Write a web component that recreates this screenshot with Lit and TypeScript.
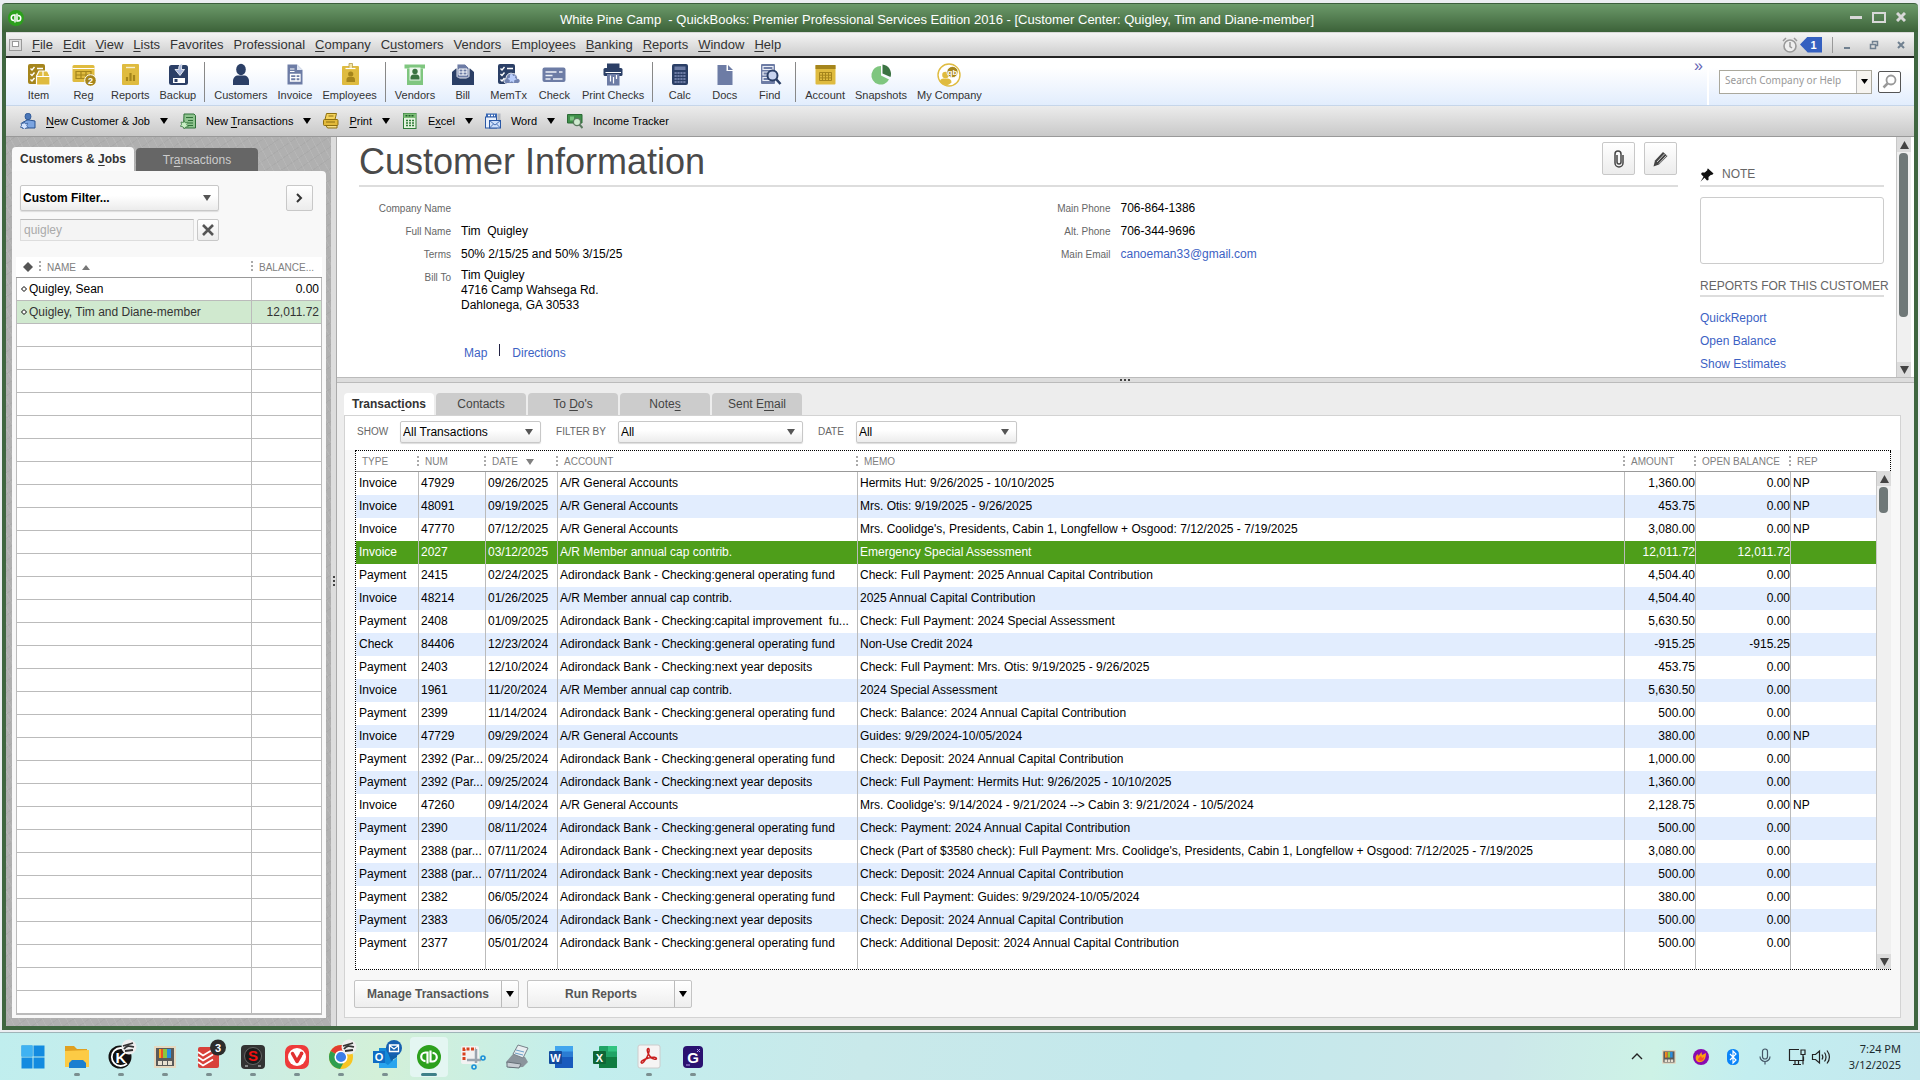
import { LitElement, html, css, svg, nothing } from "lit";
import { customElement, property } from "lit/decorators.js";
import { classMap } from "lit/directives/class-map.js";

/* ---------- shared helpers ---------- */

/** Turns "C_ustomers" into C<u>u</u>stomers. */
const mnemonic = (text: string) => {
  const at = text.indexOf("_");
  if (at < 0) return html`${text}`;
  return html`<span>${text.slice(0, at)}<u>${text[at + 1]}</u>${text.slice(at + 2)}</span>`;
};

const GOLD = "#dfbb3f";
const DGOLD = "#a5851c";
const NAVY = "#2b3f66";
const SLATE = "#6d7ca5";
const GREEN = "#7fc67f";
const DGREEN = "#3b7342";

const checklist = (c: string, k: string) => svg`
  <rect x="1" y="1" width="17" height="20" rx="2" fill="${c}"/>
  <path d="M3.500 5.500l1.500 1.500 2.500-3M3.500 11l1.500 1.500 2.500-3M3.500 16.500l1.500 1.500 2.500-3M10 5.500h6" fill="none" stroke="${k}" stroke-width="1.400"/>`;

const icons: Record<string, unknown> = {
  item: svg`${checklist(DGOLD, "#fff")}
    <path d="M9.500 13l2.500-5h8.500l2.500 5v9h-13.500z" fill="${GOLD}" stroke="#fff" stroke-width="1.200"/>
    <path d="M9.500 13.500h13.500M16 8v5" stroke="#fff" stroke-width="1.200"/>`,
  reg: svg`<rect x="0.500" y="2" width="22" height="17" rx="1.500" fill="${GOLD}"/>
    <path d="M0.500 5.500h22" stroke="#fff" stroke-width="1"/>
    <path d="M4 8.500h15v7h-15zM4 12h15M9 8.500v7M14 8.500v7" fill="none" stroke="${DGOLD}" stroke-width="1.200"/>
    <circle cx="18.500" cy="17.500" r="5.800" fill="${DGOLD}" stroke="#fff"/>
    <text x="18.500" y="21" font-size="9" font-weight="700" fill="#fff" text-anchor="middle">2</text>`,
  reports: svg`<rect x="4" y="1" width="17" height="21" rx="1" fill="${GOLD}"/>
    <path d="M8 4.500h9" stroke="#f7efd0" stroke-width="1.400"/>
    <path d="M9 18v-4M12.500 18v-8M16 18v-6" stroke="${DGOLD}" stroke-width="2.200"/>`,
  backup: svg`<rect x="3" y="2" width="19" height="20" rx="2.500" fill="${NAVY}"/>
    <rect x="7" y="15" width="12" height="5" fill="#fff"/><rect x="8.500" y="16" width="3" height="3" fill="${NAVY}"/>
    <path d="M16.500 0.500c-3.500 1-4 3.500-3.800 6h-3.700l5 6 4.500-6h-3c0-2.500 0-4 1-6z" fill="#a9b8dc" stroke="#fff" stroke-width="0.800"/>`,
  customers: svg`<ellipse cx="12" cy="6.500" rx="4.800" ry="5.800" fill="${NAVY}"/>
    <path d="M4 22v-4c0-3.500 2.500-5.500 5-5.500h6c2.500 0 5 2 5 5.500v4z" fill="${NAVY}"/>`,
  invoice: svg`<path d="M4.500 1.500h9.500l5.500 5.500v14.500h-15z" fill="${SLATE}"/>
    <path d="M14 1.500v5.500h5.500z" fill="#dfe5f2"/>
    <path d="M7 6h4.500M7 8.500h4.500" stroke="#fff" stroke-width="1.200"/>
    <path d="M7.500 11.500h9.500v6.500h-9.500zM7.500 14.700h9.500M13 11.500v6.500" fill="none" stroke="#fff" stroke-width="1.300"/>`,
  employees: svg`<rect x="4" y="3" width="17" height="19" rx="1" fill="${GOLD}"/>
    <path d="M11 0.500h3.500v5h-3.500z" fill="#f4e4a4" stroke="#b8a04c" stroke-width="0.800"/>
    <path d="M7.500 5.500h10" stroke="#fff" stroke-width="1.200"/>
    <circle cx="12.700" cy="11" r="2.600" fill="${DGOLD}"/><path d="M8.500 19v-2.500c0-2 1.500-2.500 2.500-2.500h3.500c1 0 2.500 0.500 2.500 2.500v2.500z" fill="${DGOLD}"/>`,
  vendors: svg`<path d="M1.500 1.500h20.500v4h-20.500z" fill="${GREEN}"/><path d="M4 5.500h16v16.500h-16z" fill="${GREEN}"/>
    <path d="M6.500 4.500h11v13h-11z" fill="#edf7ed"/>
    <circle cx="12" cy="8.500" r="2.700" fill="${DGREEN}"/><path d="M7.500 16.500v-2c0-2 1.500-3 3-3h3c1.500 0 3 1 3 3v2z" fill="${DGREEN}"/>`,
  bill: svg`<path d="M1 9l4-3.500h14l4 3.500v13h-22z" fill="${NAVY}"/>
    <path d="M6 1h8l4 4v10h-12z" fill="${SLATE}" stroke="#fff" stroke-width="0.900"/>
    <path d="M8 6h8v6h-8zM8 9h8M12 6v6" fill="none" stroke="#fff" stroke-width="1"/>
    <path d="M1 11l8 5h6l8-5v11h-22z" fill="${NAVY}"/>`,
  memtx: svg`${checklist(NAVY, "#fff")}
    <path d="M9.500 20.500c-3 0-3.500-4-0.500-5 0-4 3.500-6 6.500-5 4 0 5 3 5 5 3.500 0 3.500 4.500 0 5z" fill="#7283b0" stroke="#fff" stroke-width="0.900"/>
    <path d="M15 10.500l1.200 2.500 2.600-0.800-0.900 2.500 2 1.600-2.600 0.900-0.300 2.700-2.100-1.700-2.300 1.400 0.200-2.700-2.300-1.200 2.500-1.200-0.200-2.700z" fill="#b9cdfb"/>`,
  check: svg`<rect x="0.500" y="4.500" width="23" height="14.500" rx="2" fill="${SLATE}"/>
    <path d="M3.500 9h11M3.500 12.500h7M3.500 16h5M17 9h3.500M11 16h9.500" stroke="#eef1f8" stroke-width="1.500"/>`,
  printchecks: svg`<path d="M6 0.500h12.500v6h-12.500z" fill="${NAVY}"/><rect x="2.500" y="5" width="19" height="8" rx="1.500" fill="${NAVY}"/>
    <path d="M6 11h12.500v11.500h-12.500z" fill="${SLATE}"/><path d="M4.500 9.500h15.500" stroke="#fff" stroke-width="1"/>
    <path d="M9.500 12.500v6M12.500 14v6.500M15.500 12v4" stroke="#fff" stroke-width="1.200"/>`,
  calc: svg`<rect x="4" y="1" width="16" height="21" rx="2" fill="${NAVY}"/><rect x="6.500" y="3.500" width="11" height="3.500" fill="${SLATE}"/>
    <path d="M6.500 10h11M6.500 13h11M6.500 16h11M6.500 19h11" stroke="${SLATE}" stroke-width="2" stroke-dasharray="2.200 0.730"/>`,
  docs: svg`<path d="M4.500 2h9v6h6v14h-15z" fill="${SLATE}"/><path d="M15 2l5 5h-5z" fill="${SLATE}"/>`,
  find: svg`<rect x="3" y="1" width="14" height="20" rx="1" fill="${SLATE}"/>
    <path d="M5 3.500h10v3h-10zM5 9h10v3h-10zM5 14.500h10v3h-10z" fill="none" stroke="#e9edf6" stroke-width="1.200"/>
    <circle cx="14.500" cy="12.500" r="5" fill="#c9d4ee" stroke="${NAVY}" stroke-width="2"/><path d="M18 16l4.500 5" stroke="${NAVY}" stroke-width="2.600"/>`,
  account: svg`<rect x="2.500" y="2" width="20" height="19.500" rx="1" fill="${GOLD}"/><path d="M2.500 2h20v4h-20z" fill="${DGOLD}"/>
    <path d="M6.500 9.500h12v8h-12zM6.500 12.200h12M6.500 14.900h12M9.500 9.500v8M12.500 9.500v8M15.500 9.500v8" fill="none" stroke="${DGOLD}" stroke-width="1"/>`,
  snapshots: svg`<path d="M12 3a9.300 9.300 0 1 0 8 13.500l-8-4z" fill="${GREEN}"/><path d="M13.500 1.500a9.500 9.500 0 0 1 8 12.500l-8-3.500z" fill="${DGREEN}"/>`,
  mycompany: svg`<circle cx="12" cy="12" r="11" fill="#fff" stroke="${GOLD}" stroke-width="1.400"/>
    <circle cx="8.500" cy="12" r="3.300" fill="${GOLD}"/><path d="M3 19c0-3 2-3.500 4-3.500h3.500c2 0 4 1 4 4-3 3.500-8.500 3.500-11.500-0.500z" fill="${GOLD}"/>
    <circle cx="15.500" cy="9" r="5.600" fill="${DGOLD}" stroke="#fff" stroke-width="0.800"/><text x="15.500" y="11.500" font-size="8" font-weight="700" fill="#fff" text-anchor="middle">qb</text>`,

  /* action bar, 16 x 16 */
  newcustomer: svg`<ellipse cx="8" cy="3.500" rx="3" ry="3.300" fill="#4a76b8" stroke="#27508f" stroke-width="0.800"/>
    <path d="M2 15v-5l5-3h2l6 1v7z" fill="#7ba4e0" stroke="#27508f"/><path d="M4 8.500l1.200 2.300 2.500-0.500-1 2.300 1.500 2-2.500 0.400-1.500 1.800-1.300-2-2.500-0.500 1.200-2-0.600-2.300 2.300 0.500z" fill="#d5e5ff" stroke="#27508f" stroke-width="0.700"/>`,
  newtransaction: svg`<path d="M4 1h10l1.500 1.500v12.500h-12z" fill="#8fc48f" stroke="#2f7038"/><path d="M6 4.500h7M8 7.500h5M8 10h5M8 12.500h5" stroke="#2f7038"/>
    <path d="M4 7.500l1.200 2.300 2.500-0.500-1 2.300 1.500 2-2.500 0.400-1.500 1.800-1.300-2-2.500-0.500 1.200-2-0.600-2.300 2.300 0.500z" fill="#c9efc5" stroke="#2f7038" stroke-width="0.700"/>`,
  print: svg`<path d="M3.500 0.500h10l-1.500 6h-10z" fill="#f4d25a" stroke="#8d6f10"/><rect x="0.500" y="6.500" width="14.500" height="6" rx="1" fill="#e2b93a" stroke="#8d6f10"/>
    <path d="M3 12.500h11v2.500h-9.500z" fill="#f7e08a" stroke="#8d6f10"/><path d="M3 9h9M5.500 3h5" stroke="#8d6f10"/>`,
  excel: svg`<rect x="1.500" y="0.500" width="12.500" height="15" fill="#e4f4df" stroke="#2f7a37"/><path d="M1.500 0.500h12.500v4.500h-12.500z" fill="#7cbd76"/>
    <path d="M4 7.500h8M4 10h8M4 12.500h8" stroke="#2f7a37" stroke-width="1.600" stroke-dasharray="2 1"/><path d="M3.500 2.700h9" stroke="#1d5c26" stroke-dasharray="2 1" stroke-width="1.600"/>`,
  word: svg`<path d="M1 0.500h11v4h-11z" fill="#3767b5"/><path d="M12.500 0.500h3v12h-3z" fill="#b4b8c0"/><rect x="0.500" y="4" width="11" height="11" fill="#e8f0fc" stroke="#2a58a5"/>
    <path d="M3 2.500h7" stroke="#fff" stroke-dasharray="2 1" stroke-width="1.600"/><rect x="4.500" y="7.500" width="11" height="7.500" fill="#cfe0fa" stroke="#2a58a5"/><path d="M4.500 7.500l5.500 4.500 5.500-4.500M4.500 15l4-4M15.500 15l-4-4" fill="none" stroke="#2a58a5" stroke-width="0.800"/>`,
  income: svg`<path d="M0.500 1.500h14.500v8.500h-14.500z" fill="#3f8f4a" stroke="#2b6a35"/><path d="M3 3.500h4v4h-4z" fill="#7cc482"/><circle cx="10" cy="9" r="3.600" fill="#cfead0" stroke="#5c7a60" stroke-width="1.300"/><path d="M12.500 11.500l3 3.500" stroke="#5c7a60" stroke-width="2"/>`,
};

const icon = (name: string, box = 24) => html`<svg class="ico" width=${box} height=${box} viewBox="0 0 ${box} ${box}" aria-hidden="true">${icons[name]}</svg>`;
const caret = html`<svg class="caret" width="8" height="6" viewBox="0 0 8 6" aria-hidden="true"><path d="M0 0h8l-4 6z" fill="currentColor" /></svg>`;

const base = css`
  :host, * { box-sizing: border-box; }
  button, input, select, textarea { font: inherit; color: inherit; margin: 0; padding: 0; border: 0; background: none; border-radius: 0; }
  button { cursor: pointer; }
  a { color: #3c62c4; text-decoration: none; }
  u { text-underline-offset: 2px; }
  svg { display: block; flex: none; }
`;

const control = css`
  .soft { display: flex; align-items: center; justify-content: center; border: 1px solid #c8c8c8; border-radius: 2px; background: linear-gradient(#fff, #ececec); color: #444; }
  .pick { display: grid; align-items: center; border: 1px solid #c8c8c8; border-radius: 2px; background: linear-gradient(#fff 40%, #ececec); box-shadow: 0 1px 1px #ddd; color: #555; }
  .pick > * { grid-area: 1 / 1; }
  .pick select { appearance: none; width: 100%; height: 100%; padding-left: 2px; color: #000; }
  .pick .caret { justify-self: end; margin-right: 7px; pointer-events: none; }
`;

/* ---------- window chrome ---------- */

const menus = ["_File", "_Edit", "_View", "_Lists", "Favorites", "Professional", "_Company", "C_ustomers", "Vend_ors", "Emplo_yees", "_Banking", "_Reports", "_Window", "_Help"];

const tools: ([string, string] | null)[] = [
  ["item", "Item"], ["reg", "Reg"], ["reports", "Reports"], ["backup", "Backup"], null,
  ["customers", "Customers"], ["invoice", "Invoice"], ["employees", "Employees"], null,
  ["vendors", "Vendors"], ["bill", "Bill"], ["memtx", "MemTx"], ["check", "Check"], ["printchecks", "Print Checks"], null,
  ["calc", "Calc"], ["docs", "Docs"], ["find", "Find"], null,
  ["account", "Account"], ["snapshots", "Snapshots"], ["mycompany", "My Company"],
];

const actions: [string, string, boolean][] = [
  ["newcustomer", "_New Customer & Job", true],
  ["newtransaction", "New _Transactions", true],
  ["print", "_Print", true],
  ["excel", "E_xcel", true],
  ["word", "Word", true],
  ["income", "Income Tracker", false],
];

@customElement("window-chrome")
class WindowChrome extends LitElement {
  static styles = [base, css`
    :host { display: block; flex: none; }
    .title { display: flex; align-items: center; height: 29px; padding: 0 12px 0 6px; border-top: 1px solid #3c5f3c; border-radius: 4px 4px 0 0; background: linear-gradient(#6c9a6a, #3c6239); color: #fff; }
    .title h1 { flex: 1; margin: 0; padding-top: 4px; font-size: 13px; line-height: 16px; font-weight: 400; text-align: center; white-space: pre; }
    .winbtns { display: flex; align-items: center; gap: 10px; padding-bottom: 3px; }
    .frame { border: solid #3f6640; border-width: 0 4px; background: #fff; }
    .menu { display: flex; align-items: center; gap: 10px; height: 26px; padding: 0 8px 0 3px; border-bottom: 2px solid #222; border-top: 1px solid #d8d8d8; background: linear-gradient(#f4f4f4, #cdcdcd); color: #333; font-size: 13px; }
    .menu nav { display: flex; gap: 10px; }
    .menu button { line-height: 16px; white-space: nowrap; }
    .mdi { display: flex; align-items: center; margin-left: auto; }
    .badge { display: flex; align-items: center; justify-content: center; width: 22px; height: 16px; padding-left: 5px; margin-left: 2px; background: #3560c0; clip-path: polygon(0 50%, 35% 0, 100% 0, 100% 100%, 35% 100%); color: #fff; font-weight: 700; font-size: 11px; }
    .rule { width: 1px; height: 16px; background: #999; margin: 0 9px 0 10px; }
    .mdi .boxes { display: flex; gap: 17px; }
    .tools { display: flex; height: 48px; padding-left: 10px; border-bottom: 1px solid #c6d6ea; background: linear-gradient(#fff 20%, #e2edfd); color: #333; font-size: 11px; }
    .tool { display: flex; flex-direction: column; align-items: center; gap: 1px; min-width: 45px; padding: 5px 5px 0; white-space: nowrap; line-height: 14px; }
    .sep { width: 1px; margin: 4px 4px 3px 3px; background: #888; }
    .more { margin: 1px 4px 0 auto; align-self: flex-start; color: #6464b4; font-size: 16px; line-height: 14px; }
    .search { display: flex; align-items: center; gap: 6px; padding: 0 13px 0 10px; border-left: 2px solid #fff; }
    .field { display: flex; width: 153px; height: 24px; border: 1px solid #aaa89c; background: #fff; }
    .field input { flex: 1; min-width: 0; padding: 0 5px 3px; font-family: "Noto Sans", sans-serif; font-size: 10px; outline: 0; }
    .field input::placeholder { color: #999; opacity: 1; }
    .field button { display: flex; align-items: center; justify-content: center; width: 15px; border-left: 1px solid #bbb; background: #f6f4f0; color: #000; }
    .go { display: flex; align-items: center; justify-content: center; width: 23px; height: 22px; border: 1px solid #555; border-radius: 2px; background: #fff; }
    .actions { display: flex; align-items: center; height: 31px; padding-left: 14px; border-bottom: 1px solid #999; background: linear-gradient(#ececec, #c9c9c9); color: #000; font-size: 11px; }
    .actions button { display: flex; align-items: center; gap: 10px; margin-right: 12px; line-height: 14px; white-space: nowrap; }
  `];

  render() {
    return html`
      <header class="title">
        <svg width="16" height="16" viewBox="0 0 16 16" aria-hidden="true"><circle cx="8" cy="8" r="8" fill="#2ca01c" /><path d="M7 12.500v-7.500h-1a2.700 2.700 0 0 0 0 5.500M9 3.500v7.500h1a2.700 2.700 0 0 0 0-5.500" fill="none" stroke="#fff" stroke-width="1.500" /></svg>
        <h1>White Pine Camp  - QuickBooks: Premier Professional Services Edition 2016 - [Customer Center: Quigley, Tim and Diane-member]</h1>
        <div class="winbtns">
          <button aria-label="Minimize"><svg width="12" height="12" viewBox="0 0 12 12"><path d="M0 6.500h12" stroke="#d8d8d8" stroke-width="3" /></svg></button>
          <button aria-label="Maximize"><svg width="14" height="12" viewBox="0 0 14 12"><rect x="1" y="2" width="12" height="9" fill="none" stroke="#d8d8d8" stroke-width="2" /></svg></button>
          <button aria-label="Close"><svg width="10" height="10" viewBox="0 0 10 10"><path d="M1 1l8 8M9 1l-8 8" stroke="#d8d8d8" stroke-width="3" /></svg></button>
        </div>
      </header>
      <div class="frame">
        <div class="menu">
          <svg width="13" height="12" viewBox="0 0 13 12" aria-hidden="true"><rect x="0.500" y="0.500" width="12" height="11" fill="#ddd" stroke="#999" /><rect x="3.500" y="2.500" width="6" height="5" fill="#fff" stroke="#999" /></svg>
          <nav>${menus.map((m) => html`<button>${mnemonic(m)}</button>`)}</nav>
          <div class="mdi">
            <svg width="16" height="16" viewBox="0 0 16 16" aria-hidden="true"><circle cx="8" cy="9" r="6" fill="#eee" stroke="#999" stroke-width="1.600" /><path d="M8 5v4.500l2 1.500M1 4l3-3M15 4l-3-3" fill="none" stroke="#999" stroke-width="1.500" /></svg>
            <span class="badge">1</span><span class="rule"></span>
            <div class="boxes">
              <button aria-label="Minimize document"><svg width="10" height="10" viewBox="0 0 10 10"><path d="M2 8h6" stroke="#708090" stroke-width="2" /></svg></button>
              <button aria-label="Restore document"><svg width="10" height="10" viewBox="0 0 10 10"><path d="M3.500 3.500v-2h5v4h-2M1.500 4.500h5v4h-5z" fill="none" stroke="#708090" stroke-width="1.500" /></svg></button>
              <button aria-label="Close document"><svg width="10" height="10" viewBox="0 0 10 10"><path d="M2 2l6 6M8 2l-6 6" stroke="#708090" stroke-width="2" /></svg></button>
            </div>
          </div>
        </div>
        <div class="tools">
          ${tools.map((t) => (t ? html`<button class="tool">${icon(t[0])}<span>${t[1]}</span></button>` : html`<span class="sep"></span>`))}
          <button class="more" aria-label="More tools">»</button>
          <div class="search">
            <div class="field">
              <input aria-label="Search" placeholder="Search Company or Help" />
              <button aria-label="Search scope"><svg width="7" height="5" viewBox="0 0 7 5"><path d="M0 0h7l-3.500 5z" /></svg></button>
            </div>
            <button class="go" aria-label="Go"><svg width="15" height="15" viewBox="0 0 15 15"><circle cx="9" cy="6" r="4.500" fill="none" stroke="#999" stroke-width="1.800" /><path d="M5.500 9.500l-4 4" stroke="#999" stroke-width="2.500" /></svg></button>
          </div>
        </div>
        <div class="actions">
          ${actions.map(([i, label, more]) => html`<button>${icon(i, 16)}${mnemonic(label)}${more ? caret : nothing}</button>`)}
        </div>
      </div>`;
  }
}

/* ---------- scroll bar ---------- */

@customElement("scroll-rail")
class ScrollRail extends LitElement {
  @property({ type: Number }) thumb = 20;
  static styles = css`
    :host { box-sizing: border-box; display: flex; flex-direction: column; flex: none; width: 15px; background: #f0f0f0; border-left: 1px solid #c8c8c8; }
    .end { display: flex; align-items: center; justify-content: center; flex: none; height: 15px; background: #dcdcdc; }
    .track { flex: 1; padding: 1px 3px 1px 2px; }
    .thumb { border-radius: 4px; background: #6f7878; }
  `;
  render() {
    return html`
      <div class="end"><svg width="9" height="8" viewBox="0 0 9 8"><path d="M0 8h9l-4.500-8z" fill="#444" /></svg></div>
      <div class="track"><div class="thumb" style="height:${this.thumb}px"></div></div>
      <div class="end"><svg width="9" height="8" viewBox="0 0 9 8"><path d="M0 0h9l-4.500 8z" fill="#444" /></svg></div>`;
  }
}

/* ---------- customer list ---------- */

const customers: [string, string][] = [["Quigley, Sean", "0.00"], ["Quigley, Tim and Diane-member", "12,011.72"]];

@customElement("customer-list")
class CustomerList extends LitElement {
  static styles = [base, control, css`
    :host { display: flex; flex-direction: column; flex: none; width: 325px; padding: 10px 5px 8px 6px; font-size: 12px;
      background: repeating-linear-gradient(62deg, #ffffff14 0 1px, #0000 1px 7px), repeating-linear-gradient(-35deg, #00000008 0 1px, #0000 1px 9px), #b0b0b0; }
    .tabs { display: flex; gap: 2px; align-items: flex-end; }
    .tab { width: 122px; height: 23px; border-radius: 4px 4px 0 0; background: #666; color: #ccc; line-height: 22px; }
    .tab.on { height: 24px; background: #fafafa; color: #333; font-weight: 700; }
    .card { display: flex; flex-direction: column; flex: 1; min-height: 0; padding: 14px 4px 3px; background: #f8f8f8; border-radius: 0 4px 0 0; }
    .bar { display: flex; justify-content: space-between; padding: 0 9px 0 4px; }
    .filter { width: 199px; height: 26px; font-weight: 700; }
    .next { width: 27px; height: 26px; }
    .query { display: flex; gap: 3px; padding: 8px 4px 16px; }
    .query input { width: 174px; height: 22px; padding: 0 3px 1px; border: 1px solid #ddd; border-top-color: #bbb; background: #f4f4f4; color: #aaa; }
    .clear { width: 22px; height: 22px; }
    table { width: 100%; border-collapse: separate; border-spacing: 0; table-layout: fixed; background: #fff; }
    .list { flex: 1; min-height: 0; overflow: hidden; background: #fff; border-bottom: 1px solid #bbb; }
    .money { width: 71px; }
    th { height: 21px; padding: 0 0 0 7px; border-bottom: 1px solid #999; text-align: left; font-size: 10px; font-weight: 400; color: #808080; white-space: nowrap; }
    th.money { padding-left: 0; }
    .head { display: flex; align-items: center; gap: 6px; }
    .dots { width: 2px; height: 12px; background: repeating-linear-gradient(#aaa 0 2px, #0000 2px 4px); }
    td { height: 23px; padding: 0 2px; border: solid #bbb; border-width: 0 0 1px 1px; line-height: 16px; white-space: nowrap; color: #000; }
    td:last-child { border-right-width: 1px; text-align: right; }
    .on td { background: #d0e9cf; color: #333; }
    .name { display: flex; align-items: center; gap: 2px; padding-left: 2px; }
  `];

  render() {
    const rows = [...customers, ...Array.from({ length: 30 }, () => ["", ""])];
    return html`
      <div class="tabs" role="tablist">
        <button class="tab on" role="tab">${mnemonic("Customers & _Jobs")}</button>
        <button class="tab" role="tab">${mnemonic("Tr_ansactions")}</button>
      </div>
      <div class="card">
        <div class="bar">
          <div class="pick filter"><select aria-label="Customer filter"><option>Custom Filter...</option></select>${caret}</div>
          <button class="soft next" aria-label="Expand list"><svg width="7" height="10" viewBox="0 0 7 10"><path d="M1 1l4 4-4 4" fill="none" stroke="#333" stroke-width="2" /></svg></button>
        </div>
        <div class="query">
          <input aria-label="Find customer" .value=${"quigley"} />
          <button class="soft clear" aria-label="Clear search"><svg width="12" height="12" viewBox="0 0 12 12"><path d="M1 1l10 10M11 1l-10 10" stroke="#555" stroke-width="2.600" /></svg></button>
        </div>
        <div class="list">
          <table>
            <thead><tr>
              <th><span class="head"><svg width="10" height="10" viewBox="0 0 10 10"><path d="M5 0l5 5-5 5-5-5z" fill="#555" /></svg><span class="dots"></span>NAME<svg width="8" height="5" viewBox="0 0 8 5"><path d="M0 5h8l-4-5z" fill="#777" /></svg></span></th>
              <th class="money"><span class="head"><span class="dots"></span>BALANCE...</span></th>
            </tr></thead>
            <tbody>
              ${rows.map(([name, balance], i) => html`<tr class=${i === 1 ? "on" : ""}>
                <td>${name ? html`<span class="name"><svg width="6" height="6" viewBox="0 0 6 6"><path d="M3 0.500l2.500 2.500-2.500 2.500-2.500-2.500z" fill="#fff" stroke="#000" /></svg>${name}</span>` : nothing}</td>
                <td>${balance}</td></tr>`)}
            </tbody>
          </table>
        </div>
      </div>`;
  }
}

/* ---------- customer details ---------- */

@customElement("customer-info")
class CustomerInfo extends LitElement {
  static styles = [base, control, css`
    :host { display: flex; flex: none; height: 240px; overflow: hidden; padding: 0 3px 0 22px; background: #fff; font-size: 12px; color: #000; }
    .info { flex: 1; min-width: 0; }
    .top { display: flex; align-items: flex-start; gap: 9px; height: 50px; padding: 5px 1px 0 0; border-bottom: 2px solid #ddd; }
    h2 { flex: 1; margin: 0; font-size: 36px; line-height: 40px; font-weight: 400; color: #4a4a4a; }
    .tool { width: 33px; height: 33px; }
    .cols { display: grid; grid-template-columns: 1fr 1fr; padding-top: 10px; }
    dl { display: grid; grid-template-columns: 92px 1fr; grid-auto-rows: minmax(23px, auto); column-gap: 10px; align-content: start; margin: 0; line-height: 22px; }
    dt { text-align: right; font-size: 10px; line-height: 23px; color: #666; }
    dd { margin: 0; white-space: pre; }
    .addr { padding-top: 2px; line-height: 15px; white-space: pre-line; }
    .links { display: flex; gap: 12px; padding: 31px 0 0 105px; line-height: 18px; }
    .bar { width: 1px; height: 12px; background: #224; }
    aside { width: 184px; margin: 0 12px 0 22px; }
    h3 { display: flex; align-items: flex-end; gap: 8px; margin: 0; padding-bottom: 3px; border-bottom: 2px solid #ddd; font-size: 12px; line-height: 16px; font-weight: 400; color: #666; white-space: nowrap; }
    .note { height: 50px; }
    .reports { height: 29px; padding-bottom: 1px; }
    textarea { display: block; width: 100%; height: 67px; margin: 10px 0 4px; border: 1px solid #ccc; border-radius: 3px; resize: none; }
    ul { margin: 10px 0 0; padding: 0; list-style: none; line-height: 23px; }
  `];

  render() {
    return html`
      <section class="info">
        <div class="top">
          <h2>Customer Information</h2>
          <button class="soft tool" aria-label="Attach"><svg width="12" height="18" viewBox="0 0 12 18"><path d="M4 5v7a2 2 0 0 0 4 0v-8a3 3 0 0 0-6 0v9a4 4 0 0 0 8 0v-8" fill="none" stroke="#444" stroke-width="1.500" /></svg></button>
          <button class="soft tool" aria-label="Edit"><svg width="16" height="16" viewBox="0 0 16 16"><path d="M0.500 15.500l1.500-6 8-8.500 4.500 4-8.500 8.500z" fill="#444" /><path d="M4 11l7.500-8M6 12.500l7.500-8" stroke="#ddd" stroke-width="0.900" /></svg></button>
        </div>
        <div class="cols">
          <div>
            <dl>
              <dt>Company Name</dt><dd></dd>
              <dt>Full Name</dt><dd>Tim  Quigley</dd>
              <dt>Terms</dt><dd>50% 2/15/25 and 50% 3/15/25</dd>
              <dt>Bill To</dt><dd class="addr">${"Tim Quigley\n4716 Camp Wahsega Rd.\nDahlonega, GA 30533"}</dd>
            </dl>
            <div class="links"><a href="#map">Map</a><span class="bar"></span><a href="#directions">Directions</a></div>
          </div>
          <dl>
            <dt>Main Phone</dt><dd>706-864-1386</dd>
            <dt>Alt. Phone</dt><dd>706-344-9696</dd>
            <dt>Main Email</dt><dd><a href="mailto:canoeman33@gmail.com">canoeman33@gmail.com</a></dd>
          </dl>
        </div>
      </section>
      <aside>
        <h3 class="note"><svg width="14" height="14" viewBox="0 0 14 14" aria-hidden="true"><path d="M8 0.500l5.500 5-1.500 1.500-1-0.300-2.500 2.300v3l-1.500 0.500-2.500-2.800-4 4 3-5-2.500-2.700 1-1.500h2.800l2.700-2.500-0.300-1z" fill="#111" /></svg><label for="note">NOTE</label></h3>
        <textarea id="note"></textarea>
        <h3 class="reports">REPORTS FOR THIS CUSTOMER</h3>
        <ul><li><a href="#quick">QuickReport</a></li><li><a href="#open">Open Balance</a></li><li><a href="#estimates">Show Estimates</a></li></ul>
      </aside>
      <scroll-rail .thumb=${164}></scroll-rail>`;
  }
}

/* ---------- transactions ---------- */

const GA = "A/R General Accounts";
const MA = "A/R Member annual cap contrib.";
const OP = "Adirondack Bank - Checking:general operating fund";
const CI = "Adirondack Bank - Checking:capital improvement  fu...";
const NY = "Adirondack Bank - Checking:next year deposits";

const transactions: string[][] = [
  ["Invoice", "47929", "09/26/2025", GA, "Hermits Hut: 9/26/2025 - 10/10/2025", "1,360.00", "0.00", "NP"],
  ["Invoice", "48091", "09/19/2025", GA, "Mrs. Otis: 9/19/2025 - 9/26/2025", "453.75", "0.00", "NP"],
  ["Invoice", "47770", "07/12/2025", GA, "Mrs. Coolidge's, Presidents, Cabin 1, Longfellow + Osgood: 7/12/2025 - 7/19/2025", "3,080.00", "0.00", "NP"],
  ["Invoice", "2027", "03/12/2025", MA, "Emergency Special Assessment", "12,011.72", "12,011.72", ""],
  ["Payment", "2415", "02/24/2025", OP, "Check: Full Payment: 2025 Annual Capital Contribution", "4,504.40", "0.00", ""],
  ["Invoice", "48214", "01/26/2025", MA, "2025 Annual Capital Contribution", "4,504.40", "0.00", ""],
  ["Payment", "2408", "01/09/2025", CI, "Check: Full Payment: 2024 Special Assessment", "5,630.50", "0.00", ""],
  ["Check", "84406", "12/23/2024", OP, "Non-Use Credit 2024", "-915.25", "-915.25", ""],
  ["Payment", "2403", "12/10/2024", NY, "Check: Full Payment: Mrs. Otis: 9/19/2025 - 9/26/2025", "453.75", "0.00", ""],
  ["Invoice", "1961", "11/20/2024", MA, "2024 Special Assessment", "5,630.50", "0.00", ""],
  ["Payment", "2399", "11/14/2024", OP, "Check: Balance: 2024 Annual Capital Contribution", "500.00", "0.00", ""],
  ["Invoice", "47729", "09/29/2024", GA, "Guides: 9/29/2024-10/05/2024", "380.00", "0.00", "NP"],
  ["Payment", "2392 (Par...", "09/25/2024", OP, "Check: Deposit: 2024 Annual Capital Contribution", "1,000.00", "0.00", ""],
  ["Payment", "2392 (Par...", "09/25/2024", NY, "Check: Full Payment: Hermits Hut: 9/26/2025 - 10/10/2025", "1,360.00", "0.00", ""],
  ["Invoice", "47260", "09/14/2024", GA, "Mrs. Coolidge's: 9/14/2024 - 9/21/2024 --> Cabin 3: 9/21/2024 - 10/5/2024", "2,128.75", "0.00", "NP"],
  ["Payment", "2390", "08/11/2024", OP, "Check: Payment: 2024 Annual Capital Contribution", "500.00", "0.00", ""],
  ["Payment", "2388 (par...", "07/11/2024", NY, "Check (Part of $3580 check): Full Payment: Mrs. Coolidge's, Presidents, Cabin 1, Longfellow + Osgood: 7/12/2025 - 7/19/2025", "3,080.00", "0.00", ""],
  ["Payment", "2388 (par...", "07/11/2024", NY, "Check: Deposit: 2024 Annual Capital Contribution", "500.00", "0.00", ""],
  ["Payment", "2382", "06/05/2024", OP, "Check: Full Payment: Guides: 9/29/2024-10/05/2024", "380.00", "0.00", ""],
  ["Payment", "2383", "06/05/2024", NY, "Check: Deposit: 2024 Annual Capital Contribution", "500.00", "0.00", ""],
  ["Payment", "2377", "05/01/2024", OP, "Check: Additional Deposit: 2024 Annual Capital Contribution", "500.00", "0.00", ""],
];

const columns = ["TYPE", "NUM", "DATE", "ACCOUNT", "MEMO", "AMOUNT", "OPEN BALANCE", "REP"];
const tabs = ["Transact_ions", "Contacts", "To _Do's", "Note_s", "Sent E_mail"];

@customElement("transaction-panel")
class TransactionPanel extends LitElement {
  static styles = [base, control, css`
    :host { display: flex; flex-direction: column; flex: 1; min-height: 0; padding: 10px 13px 8px 7px; background: #ededed; font-size: 12px; color: #000; }
    .tabs { display: flex; gap: 2px; }
    .tab { width: 90px; height: 22px; border-radius: 4px 4px 0 0; background: #ccc; color: #444; line-height: 20px; white-space: nowrap; }
    .tab.on { background: #fff; color: #333; font-weight: 700; }
    .panel { display: flex; flex-direction: column; flex: 1; min-height: 0; border: 1px solid #d3d3d3; background: #f8f8f8; }
    .filters { display: flex; align-items: center; height: 34px; padding: 0 0 3px 12px; gap: 15px; background: #fff; }
    .filters label { display: flex; align-items: center; gap: 12px; font-size: 10px; color: #666; }
    .pick { height: 22px; font-size: 12px; }
    .show { width: 141px; }
    .by { width: 185px; }
    .date { width: 161px; }
    .grid { display: flex; flex: 1; min-height: 0; margin: 0 9px 0 10px; border: 1px dotted #000; border-right: 0; background: #fff; }
    .rail { display: flex; flex-direction: column; flex: none; }
    .corner { height: 20px; border-right: 1px dotted #000; }
    .rail scroll-rail { flex: 1; }
    .hold { flex: 1; min-width: 0; overflow: hidden; }
    table { width: 100%; height: 100%; border-collapse: separate; border-spacing: 0; table-layout: fixed; }
    .c0 { width: 63px; } .c1 { width: 67px; } .c2 { width: 72px; } .c3 { width: 300px; }
    .c5 { width: 71px; } .c6 { width: 95px; } .c7 { width: 85px; }
    th { height: 21px; padding: 1px 0 0; border-bottom: 1px solid #999; font-size: 10px; font-weight: 400; color: #808080; white-space: nowrap; }
    .head { display: flex; align-items: center; padding-left: 6px; gap: 8px; line-height: 12px; }
    .head .dots { width: 2px; height: 12px; margin-left: auto; background: repeating-linear-gradient(#aaa 0 2px, #0000 2px 4px); }
    td { height: 23px; padding: 0 0 1px 2px; border-right: 1px solid #bbb; line-height: 16px; white-space: pre; overflow: hidden; }
    td.c0 { padding-left: 3px; }
    td.c5, td.c6 { padding: 0 0 1px; text-align: right; }
    td.c7 { border-right: 0; }
    tr:nth-child(even) td { background: #e2edfe; }
    tr.on td { background: #4e9e1a; color: #fff; }
    tr.fill td { height: auto; background: #fff; padding: 0; }
    .foot { display: flex; gap: 8px; padding: 10px 0 9px 9px; }
    .split { display: flex; width: 165px; height: 28px; border: 1px solid #c4c4c4; border-radius: 2px; background: linear-gradient(#fff, #eee); color: #555; font-weight: 700; }
    .split .main { flex: 1; }
    .split .drop { display: flex; align-items: center; justify-content: center; width: 17px; border-left: 1px solid #bbb; color: #000; }
  `];

  render() {
    const pick = (cls: string, id: string, label: string, value: string) => html`
      <label for=${id}>${label}<span class="pick ${cls}"><select id=${id}><option>${value}</option></select>${caret}</span></label>`;
    return html`
      <div class="tabs" role="tablist">${tabs.map((t, i) => html`<button role="tab" class=${classMap({ tab: true, on: i === 0 })}>${mnemonic(t)}</button>`)}</div>
      <div class="panel">
        <div class="filters">
          ${pick("show", "show", "SHOW", "All Transactions")}
          ${pick("by", "by", "FILTER BY", "All")}
          ${pick("date", "date", "DATE", "All")}
        </div>
        <div class="grid">
          <div class="hold">
            <table>
              <thead><tr>${columns.map((c, i) => html`<th class="c${i}"><span class="head">${c}${c === "DATE" ? caret : nothing}${i < 7 ? html`<span class="dots"></span>` : nothing}</span></th>`)}</tr></thead>
              <tbody>
                ${transactions.map((row, i) => html`<tr class=${i === 3 ? "on" : ""}>${row.map((cell, k) => html`<td class="c${k}">${cell}</td>`)}</tr>`)}
                <tr class="fill">${columns.map((_, k) => html`<td class="c${k}"></td>`)}</tr>
              </tbody>
            </table>
          </div>
          <div class="rail"><div class="corner"></div><scroll-rail .thumb=${26}></scroll-rail></div>
        </div>
        <div class="foot">
          ${["Manage Transactions", "Run Reports"].map((b) => html`<div class="split"><button class="main">${b}</button><button class="drop" aria-label="${b} options">${caret}</button></div>`)}
        </div>
      </div>`;
  }
}

/* ---------- task bar ---------- */

const photoBadge = svg`<circle cx="24" cy="6" r="7.500" fill="#eee"/><path d="M18 5l10-3M19 8c3-4 6-3 10-2M20 10l8-1" stroke="#333" stroke-width="1.800" fill="none"/>`;
const letter = (x: number, y: number, size: number, fill: string, t: string) =>
  svg`<text x="${x}" y="${y}" font-size="${size}" font-weight="700" fill="${fill}" text-anchor="middle">${t}</text>`;
const qbLogo = svg`<circle cx="16" cy="16" r="12" fill="#2ca01c"/><path d="M14.500 22.500v-11h-2a4.300 4.300 0 0 0 0 8.600M17.500 9.500v11h2a4.300 4.300 0 0 0 0-8.600" fill="none" stroke="#fff" stroke-width="2.200"/>`;
const toyBox = svg`<rect x="6" y="6" width="20" height="20" fill="#5a5a5a" stroke="#e6d9c0" stroke-width="2"/><path d="M10 8h4v9h-4z" fill="#e8502a"/><path d="M14 8h4v9h-4z" fill="#8cc63f"/><path d="M18 8h4v9h-4z" fill="#2a8ee0"/><path d="M10 8h2v9h-2z" fill="#f6a81c"/><path d="M9 20h4v4h-4zM14 20h4v4h-4zM19 20h4v4h-4z" fill="#e8e0d0"/>`;

/* [name, artwork in a 32 x 32 box, state] */
const apps: [string, unknown, "" | "open" | "active"][] = [
  ["Start", svg`<path d="M4.500 4.500h11v11h-11zM16.500 4.500h11v11h-11zM4.500 16.500h11v11h-11zM16.500 16.500h11v11h-11z" fill="#138be0"/><path d="M4.500 4.500h11v11h-11z" fill="#3fb2f2"/>`, ""],
  ["Files", svg`<path d="M4 5h9l3 3h10v6h-22z" fill="#e0a020"/><path d="M4 10l24-1v17h-24z" fill="#fccb45"/><path d="M8 27v-5l3-3h11l3 3v5z" fill="#1a7fd0"/>`, "open"],
  ["K", svg`<circle cx="15" cy="16" r="11.500" fill="#111"/><path d="M22 9.500a9 9 0 1 0 0 13" fill="none" stroke="#fff" stroke-width="1.800"/>${letter(16, 22, 15, "#fff", "K")}${photoBadge}`, "open"],
  ["Toys", toyBox, "open"],
  ["Tasks", svg`<rect x="5" y="6" width="21" height="21" rx="2" fill="#d8413a"/><path d="M5 11l5 3.500 10-6M5 16l5 3.500 10-6M5 21l5 3.500 10-6" fill="none" stroke="#fff" stroke-width="1.800"/><circle cx="25" cy="6.500" r="8" fill="#2c2c2c"/>${letter(25, 10.500, 11, "#fff", "3")}`, "open"],
  ["S", svg`<rect x="4" y="4" width="24" height="24" rx="4" fill="#333"/><circle cx="16" cy="15" r="8.500" fill="#1c1c1c" stroke="#666"/>${letter(16, 20, 15, "#f01010", "S")}<path d="M8 25h3M21 25h3" stroke="#888" stroke-width="2"/>`, "open"],
  ["Browser", svg`<rect x="4" y="4" width="24" height="24" rx="7" fill="#ee3a3a"/><circle cx="16" cy="16" r="9" fill="#fff"/><path d="M11.500 12.500l4.500 8 3.500-6" fill="none" stroke="#e03030" stroke-width="3.500" stroke-linecap="round" stroke-linejoin="round"/><circle cx="20.500" cy="12.500" r="1.900" fill="#e03030"/>`, "open"],
  ["Chrome", svg`<circle cx="16" cy="16" r="12" fill="#f8c522"/><path d="M16 16l-10.400-6a12 12 0 0 1 20.800 0z" fill="#e23c30"/><path d="M5.600 10a12 12 0 0 0 9.400 18l5-9-4-3z" fill="#2f9e4f"/><circle cx="16" cy="16" r="5.800" fill="#3b7de8" stroke="#fff" stroke-width="1.500"/>${photoBadge}`, "open"],
  ["Mail", svg`<path d="M10 7h14v19h-14z" fill="#1489d8"/><path d="M10 18l9 6 9-8v11h-18z" fill="#2aa5ee"/><path d="M17 6h11v10l-6 4z" fill="#0f5ea8"/><rect x="4" y="10" width="12" height="12" fill="#0f6cc4"/>${letter(10, 20, 11, "#fff", "O")}<circle cx="25" cy="7" r="8" fill="#1660b0"/><path d="M20.500 4h9v6.500h-9zM20.500 4.500l4.500 3.500 4.500-3.500" fill="none" stroke="#fff" stroke-width="1.300"/>`, "open"],
  ["QuickBooks", qbLogo, "active"],
  ["Snip", svg`<rect x="4" y="5" width="18" height="18" rx="2" fill="#f2f2f2"/><path d="M7 19v-11h12" fill="none" stroke="#d8401c" stroke-width="3" stroke-dasharray="3 1.500"/><path d="M19 8v14M10 19h14" stroke="#9aa4ae" stroke-width="2.500"/><circle cx="26" cy="17" r="2" fill="none" stroke="#1a8fd8" stroke-width="1.600"/><circle cx="17" cy="26" r="2" fill="none" stroke="#1a8fd8" stroke-width="1.600"/>`, ""],
  ["Scanner", svg`<path d="M5 21l7-8 12 3 3 5-5 5-14 1z" fill="#8b949c"/><path d="M12 13l5-9 10 3-5 10z" fill="#e8edf0" stroke="#78828a"/><path d="M6 21l14 2-2 4-12-1z" fill="#c8ced4" stroke="#68727a"/><path d="M15 9l8 2M14 12l8 2" stroke="#6aa0c8"/>`, ""],
  ["Word", svg`<rect x="10" y="5" width="18" height="22" rx="1" fill="#2b7cd3"/><path d="M10 16h18v11h-18z" fill="#185abd"/><path d="M10 5h18v5.500h-18z" fill="#41a5ee"/><rect x="4" y="10" width="13" height="13" rx="1" fill="#124a9c"/>${letter(10.500, 20.500, 11, "#fff", "W")}`, ""],
  ["Excel", svg`<rect x="10" y="5" width="18" height="22" rx="1" fill="#21a366"/><path d="M19 16h9v11h-18v-11z" fill="#107c41"/><path d="M19 5h9v5.500h-9z" fill="#33c481"/><rect x="4" y="10" width="13" height="13" rx="1" fill="#0e6636"/>${letter(10.500, 20.500, 11, "#fff", "X")}`, ""],
  ["Acrobat", svg`<rect x="5" y="4" width="22" height="23" rx="2" fill="#f6f4f4" stroke="#ccc"/><path d="M8.500 22c-1.500-1 1.500-3.500 7-5s8-0.500 8 0.700-4 1-7-3-2.500-7.200-1.200-7.200 1.200 4-1.300 8.500-4.500 6.800-5.500 6z" fill="none" stroke="#c81e1e" stroke-width="1.500"/>`, "open"],
  ["G", svg`<rect x="6" y="5" width="20" height="22" rx="4" fill="#2a1170"/>${letter(16, 22, 15, "#fff", "G")}<path d="M20 8l3 3M23 8l-3 3M9 24h4" stroke="#b49af0"/>`, "open"],
];

@customElement("task-bar")
class TaskBar extends LitElement {
  static styles = [base, css`
    :host { display: flex; align-items: center; flex: none; height: 48px; padding: 0 19px 0 11px; border-top: 1px solid #9fb4b8; color: #1c2a2e;
      background: linear-gradient(100deg, #c0eeee 0, #c8ecea 10%, #d3f0d8 20%, #c2eeee 31%, #c9e9ea 45%, #c3e8ec 62%, #cce8ea 78%, #cdf2e6 86%, #c3eef0 91%, #c4e8ee 100%); }
    .apps { display: flex; }
    .app { display: flex; flex-direction: column; align-items: center; width: 44px; height: 40px; padding-top: 4px; }
    .app svg { overflow: visible; }
    .mark { width: 6px; height: 3px; border-radius: 2px; background: #7b8f90; }
    .app.active { width: 38px; margin: 0 3px; border-radius: 4px; background: #e4f6f2; }
    .app.active .mark { width: 16px; background: #3f8088; }
    .tray { display: flex; align-items: center; gap: 8px; margin-left: auto; }
    .pair { display: flex; }
    .clock { width: 60px; text-align: right; font: 11px/16px "Noto Sans", sans-serif; }
  `];

  render() {
    const small = (label: string, art: unknown) => html`<button aria-label=${label}><svg width="24" height="24" viewBox="0 0 24 24">${art}</svg></button>`;
    return html`
      <div class="apps">
        ${apps.map(([name, art, state]) => html`<button class="app ${state}" aria-label=${name}><svg width="32" height="32" viewBox="0 0 32 32">${art}</svg>${state ? html`<span class="mark"></span>` : nothing}</button>`)}
      </div>
      <div class="tray">
        ${small("Hidden icons", svg`<path d="M7 14l5-5 5 5" fill="none" stroke="#222" stroke-width="1.400"/>`)}
        ${small("Toys", svg`<g transform="translate(2 2) scale(0.620)">${toyBox}</g>`)}
        ${small("Flame", svg`<circle cx="12" cy="12" r="8" fill="#8a0bb0"/><path d="M7 15c-1-3 0-5 2-6l0.500 2 3-4 0.500 3 4-2c0 4-1 8-5 9-3 0.500-4-0.500-5-2z" fill="#fca010"/><path d="M9 15c0-2 2-3 3-4l1 2 2-1c0 3-2 4-4 4z" fill="#f8502a"/>`)}
        ${small("Bluetooth", svg`<rect x="6" y="4" width="12" height="16" rx="5.500" fill="#0a84f8"/><path d="M9 9l6 6-3 3v-12l3 3-6 6" fill="none" stroke="#fff" stroke-width="1.200"/>`)}
        ${small("Microphone", svg`<rect x="9.500" y="4" width="5" height="10" rx="2.500" fill="none" stroke="#456" stroke-width="1.200"/><path d="M7 11.500a5 5 0 0 0 10 0M12 16.500v3" fill="none" stroke="#456" stroke-width="1.200"/>`)}
        <div class="pair">
          ${small("Network", svg`<path d="M14 4.500h-9.500v11h14v-4M8 19.500h8M10 15.500v4M13.500 15.500v4M16 5h4v4.500h-4zM18 9.500v10" fill="none" stroke="#222" stroke-width="1.200"/>`)}
          ${small("Volume", svg`<path d="M3.500 9.500v5h3l4 3.500v-12l-4 3.500zM13 9.500c1 1.500 1 3.500 0 5M15.500 7.500c2 2.500 2 6.500 0 9M18 5.500c3 4 3 9 0 13" fill="none" stroke="#222" stroke-width="1.200"/>`)}
        </div>
        <div class="clock">7:24 PM<br />3/12/2025</div>
      </div>`;
  }
}

/* ---------- page ---------- */

@customElement("app-root")
class AppRoot extends LitElement {
  static styles = css`
    :host, * { box-sizing: border-box; }
    :host { display: flex; flex-direction: column; height: 100vh; background: #eceef2; font-family: "Liberation Sans", Arial, sans-serif; }
    .window { display: flex; flex-direction: column; flex: 1; min-height: 0; margin: 3px 2px 2px; }
    .body { display: flex; flex: 1; min-height: 0; border: solid #3f6640; border-width: 0 4px 4px; background: #fff; }
    .vsplit { display: flex; align-items: center; flex: none; width: 6px; border-right: 1px solid #aaa; background: #ddd; }
    .vgrip { width: 2px; height: 11px; margin-left: 2px; background: repeating-linear-gradient(#444 0 2px, #0000 2px 4px); }
    main { display: flex; flex-direction: column; flex: 1; min-width: 0; }
    .hsplit { display: flex; align-items: center; justify-content: center; flex: none; height: 6px; border: solid #bbb; border-width: 1px 0; background: #ddd; }
    .hgrip { width: 11px; height: 2px; background: repeating-linear-gradient(90deg, #444 0 2px, #0000 2px 4px); }
  `;
  render() {
    return html`
      <div class="window">
        <window-chrome></window-chrome>
        <div class="body">
          <customer-list></customer-list>
          <div class="vsplit"><span class="vgrip"></span></div>
          <main>
            <customer-info></customer-info>
            <div class="hsplit"><span class="hgrip"></span></div>
            <transaction-panel></transaction-panel>
          </main>
        </div>
      </div>
      <task-bar></task-bar>`;
  }
}
